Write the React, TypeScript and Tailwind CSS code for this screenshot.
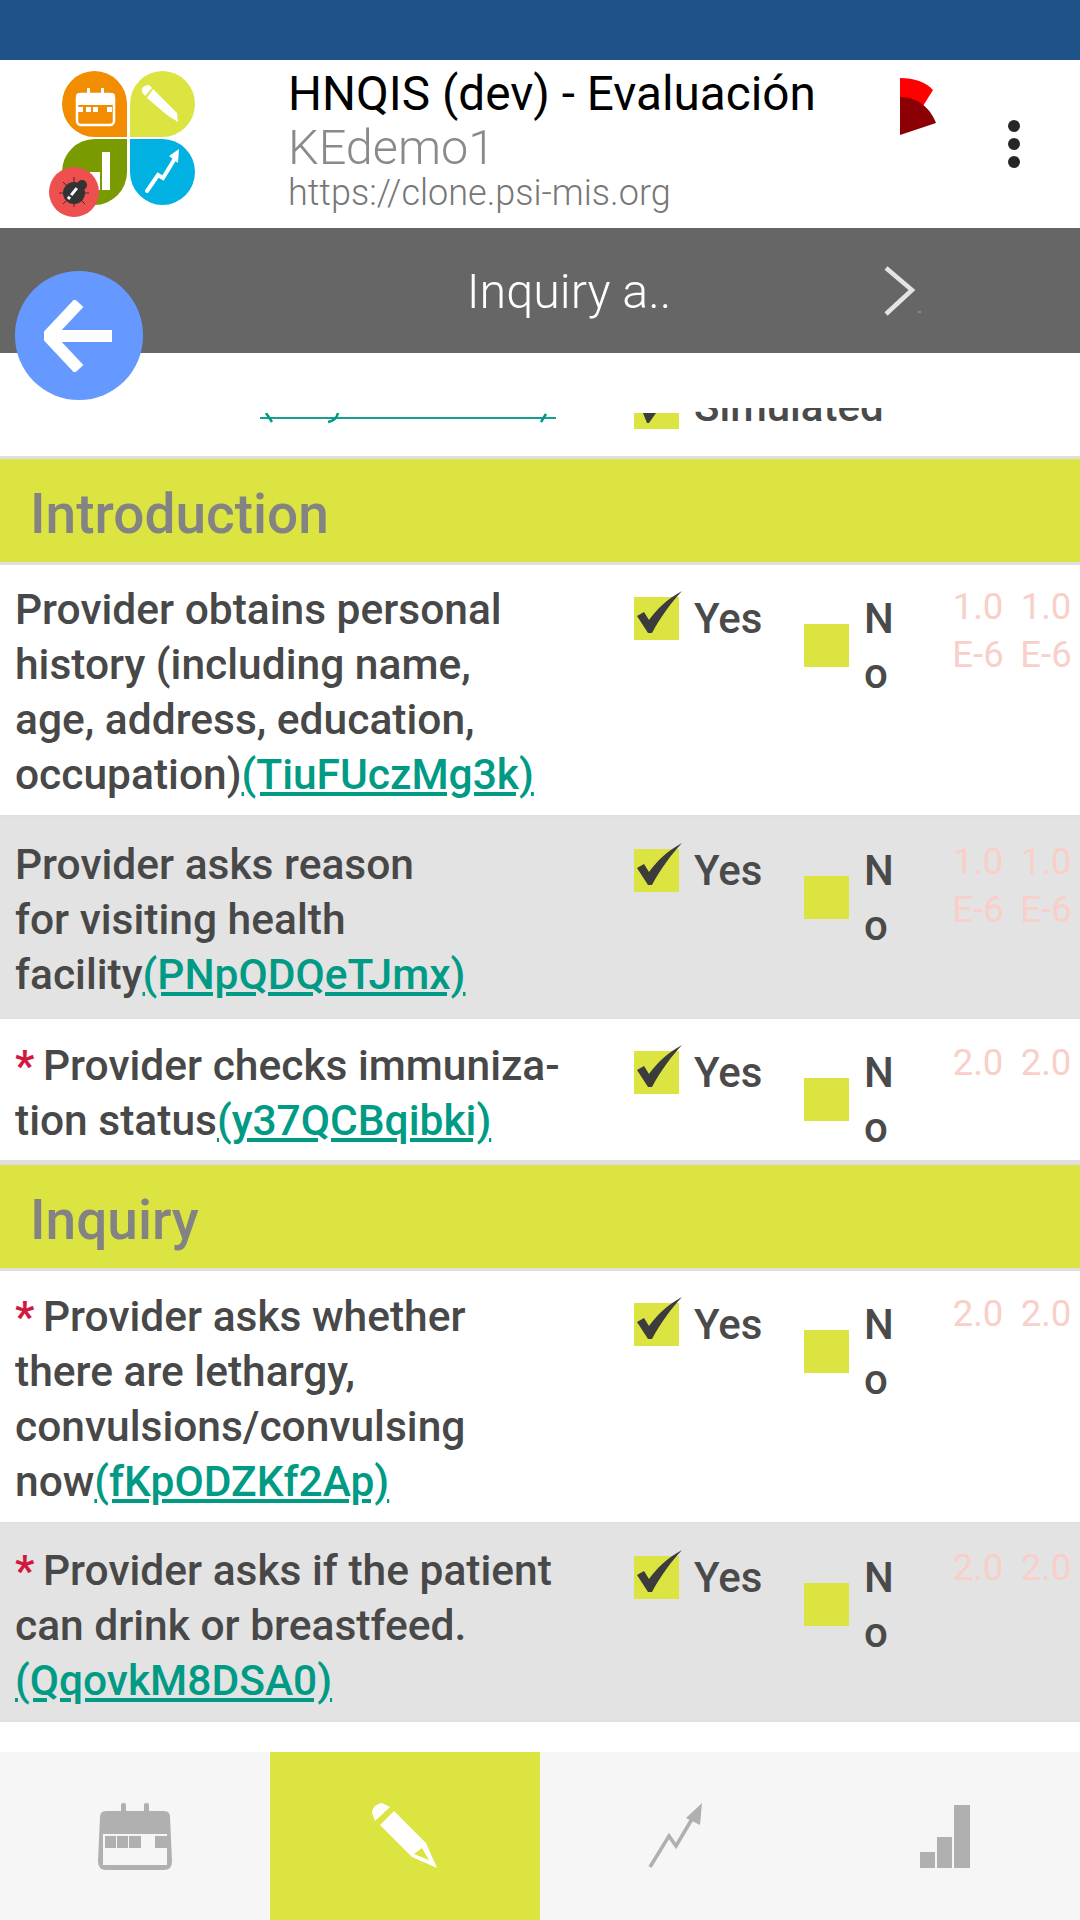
import React from "react";

const ROBOTO = "font-['Roboto','Noto_Sans',sans-serif]";

function Logo() {
  return (
    <svg width="150" height="152" viewBox="0 0 150 152">
      {/* calendario */}
      <path d="M13 36 a32.5 33 0 0 1 65 0 V69 H45.5 a32.5 33 0 0 1 -32.5 -33 Z" fill="#f28c00" />
      <rect x="28" y="26" width="37" height="31" rx="4" fill="none" stroke="#fff" strokeWidth="2.5" />
      <rect x="27" y="25" width="39" height="12" rx="3" fill="#fff" />
      <rect x="38" y="20" width="3" height="7" fill="#fff" />
      <rect x="52" y="20" width="3" height="7" fill="#fff" />
      <rect x="29" y="39" width="5" height="5" fill="#fff" />
      <rect x="37" y="39" width="5" height="5" fill="#fff" />
      <rect x="44" y="39" width="5" height="5" fill="#fff" />
      <rect x="58" y="39" width="5" height="5" fill="#fff" />
      {/* lapiz */}
      <path d="M81 69 V36 a32.5 33 0 0 1 65 0 a32.5 33 0 0 1 -32.5 33 Z" fill="#dce441" />
      <path d="M93 24 C92 19 96 17 100 17 L103 20 L96 28 Z" fill="#fff" />
      <path d="M104 21 L98 30 L118 47 L129 54 L128 45 Z" fill="#fff" />
      {/* barras */}
      <path d="M78 71 V104 a32.5 33 0 0 1 -65 0 a32.5 33 0 0 1 32.5 -33 Z" fill="#7a9a01" />
      <rect x="53" y="84" width="8" height="38" fill="#fff" />
      <rect x="41" y="104" width="10" height="18" fill="#fff" />
      {/* tendencia */}
      <path d="M81 71 H113.5 a32.5 33 0 0 1 0 66 a32.5 33 0 0 1 -32.5 -33 Z" fill="#00b1e1" />
      <path d="M98 123 L109 107 L114 110 L125 92" stroke="#fff" strokeWidth="4" fill="none" strokeLinecap="round" />
      <path d="M130 81 L120 88 L129 95 Z" fill="#fff" />
      {/* bicho */}
      <circle cx="25" cy="124" r="25" fill="#ee5050" />
      <circle cx="25" cy="125" r="11" fill="#333" />
      <circle cx="33" cy="117" r="5" fill="#333" />
      <path d="M25 109 V139 M10 125 H40 M14 114 L36 136 M14 136 L24 126" stroke="#333" strokeWidth="1" />
      <path d="M19 131 L28 120" stroke="#fff" strokeWidth="3" strokeDasharray="3 2 9" />
    </svg>
  );
}

function Check() {
  return (
    <svg className="absolute left-0 -top-[6px]" width="50" height="48" viewBox="0 0 50 48">
      <path d="M3 25 L10 21 L15 29 C22 19 33 8 48 0 C37 12 27 25 18 42 L14 42 Z" fill="#3c3c3c" />
    </svg>
  );
}

function Box({ checked, className }: { checked?: boolean; className?: string }) {
  return (
    <div className={`relative h-[43px] w-[45px] shrink-0 bg-[#dce441] ${className ?? ""}`}>
      {checked && <Check />}
    </div>
  );
}

function Score({ value, two }: { value: string; two?: boolean }) {
  return (
    <span className="w-[60px] text-center">
      {value}
      {two && <br />}
      {two && "E-6"}
    </span>
  );
}

type RowProps = {
  height: string;
  grey?: boolean;
  req?: boolean;
  lines: string[];
  code: string;
  score: string;
  two?: boolean;
  shift?: string;
};

function Row({ height, grey, req, lines, code, score, two, shift }: RowProps) {
  return (
    <div className={`flex border-b-2 border-[#e0e0e0] pt-[17px] ${height} ${grey ? "bg-[#e3e3e3]" : "bg-white"}`}>
      <div className={`w-[618px] shrink-0 pl-[15px] text-[42.5px] leading-[55px] font-medium text-[#484848] ${shift ?? ""}`}>
        {lines.map((l, i) => (
          <div key={i} className="whitespace-nowrap">
            {i === 0 && req && <span className="inline-block w-[28px] font-bold text-[#d3183f]">*</span>}
            {l}
            {i === lines.length - 1 && <span className="text-[#009a85] underline">{code}</span>}
          </div>
        ))}
      </div>
      <div className="flex w-[186px] shrink-0 items-start pt-[15px] pl-[16px]">
        <Box checked />
        <span className="ml-[15px] text-[42px] leading-[44px] font-medium text-[#4a4a4a]">Yes</span>
      </div>
      <div className="flex w-[144px] shrink-0 items-start pt-[15px]">
        <Box className="mt-[27px]" />
        <span className="-mt-[6px] ml-[15px] w-[30px] text-[42px] leading-[55px] font-medium text-[#4a4a4a]">
          N
          <br />o
        </span>
      </div>
      <div className={`flex w-[132px] gap-[8px] pt-[1px] text-[36.5px] leading-[48px] text-[#f8cfc9] ${shift ?? ""}`}>
        <Score value={score} two={two} />
        <Score value={score} two={two} />
      </div>
    </div>
  );
}

function Section({ title }: { title: string }) {
  return (
    <div className="flex h-[109px] shrink-0 items-center border-y-[3px] border-[#dfdfdf] bg-[#dce441] pt-[7px] pl-[30px] text-[55px] font-medium text-[#838383]">
      {title}
    </div>
  );
}

function NavIcon({ children, active }: { children: React.ReactNode; active?: boolean }) {
  return <div className={`flex flex-1 items-center justify-center ${active ? "bg-[#dce441]" : ""}`}>{children}</div>;
}

export default function App() {
  return (
    <div className={`relative flex h-[1920px] w-[1080px] flex-col overflow-hidden bg-white ${ROBOTO}`}>
      <div className="h-[60px] shrink-0 bg-[#1e5288]" />

      {/* encabezado */}
      <header className="relative flex h-[168px] shrink-0 items-start bg-white pl-[49px]">
        <div className="mt-[8px] w-[239px]">
          <Logo />
        </div>
        <div className="mt-[5px] flex flex-col">
          <span className="text-[47.7px] leading-[58px] text-black">HNQIS (dev) - Evaluación</span>
          <span className="text-[48.6px] leading-[50px] font-light text-[#8a8a8a]">KEdemo1</span>
          <span className="text-[36px] leading-[40px] font-light text-[#777777]">https://clone.psi-mis.org</span>
        </div>
        <svg className="absolute left-[900px] top-[18px]" width="38" height="58" viewBox="0 0 38 58">
          <path d="M0 0 C14 0 26 4 33 12 L23 28 L0 40 Z" fill="#ff0000" />
          <path d="M0 19 C18 19 30 30 36 45 L0 57 Z" fill="#8a0005" />
        </svg>
        <div className="absolute left-[1008px] top-[60px] flex flex-col gap-[6px]">
          <div className="h-[12px] w-[12px] rounded-full bg-[#262626]" />
          <div className="h-[12px] w-[12px] rounded-full bg-[#262626]" />
          <div className="h-[12px] w-[12px] rounded-full bg-[#262626]" />
        </div>
      </header>

      {/* progreso */}
      <div className="relative flex h-[125px] shrink-0 items-center justify-center bg-[#666666] pt-[4px] pl-[58px]">
        <span className="text-[48.4px] font-light text-white">Inquiry a..</span>
        <svg className="absolute left-[882px] top-[36px]" width="40" height="54" viewBox="0 0 40 54">
          <path d="M4 4 L30 26 L4 50" fill="none" stroke="#e4e4e4" strokeWidth="4.5" />
          <rect x="36" y="47" width="3" height="2" fill="#8a8a8a" />
        </svg>
      </div>

      {/* boton atras */}
      <div className="absolute left-[15px] top-[271px] z-10 flex h-[129px] w-[128px] items-center justify-center rounded-full bg-[#6699ff]">
        <svg width="70" height="72" viewBox="0 0 70 72">
          <path d="M35 3 L4 36 L35 69 M4 36 H68" fill="none" stroke="#fff" strokeWidth="12" />
        </svg>
      </div>

      {/* fila recortada por el scroll */}
      <div className="mt-[55px] flex h-[48px] shrink-0 overflow-hidden bg-white">
        <div className="relative w-[618px]">
          <div className="absolute left-[260px] top-[9px] h-[2px] w-[296px] bg-[#16a08c]" />
          <svg className="absolute left-[260px] top-[5px]" width="296" height="12" viewBox="0 0 296 12">
            <path d="M6 0 L12 9 M78 0 C77 5 73 8 68 9 M286 1 L281 9" fill="none" stroke="#009a85" strokeWidth="2.5" />
          </svg>
        </div>
        <div className="relative flex-1">
          <div className="absolute left-[16px] top-[5px] h-[16px] w-[45px] bg-[#dce441]" />
          <svg className="absolute left-[25px] top-[5px]" width="14" height="11" viewBox="0 0 14 11">
            <path d="M0 0 H13 L6 10 H4 Z" fill="#3c3c3c" />
          </svg>
          <span className="absolute left-[76px] top-[-23px] text-[42px] leading-[44px] font-medium text-[#4a4a4a]">Simulated</span>
        </div>
      </div>

      <Section title="Introduction" />
      <Row height="h-[252px]" lines={["Provider obtains personal", "history (including name,", "age, address, education,", "occupation)"]} code="(TiuFUczMg3k)" score="1.0" two />
      <Row height="h-[202px]" grey shift="mt-[3px]" lines={["Provider asks reason", "for visiting health", "facility"]} code="(PNpQDQeTJmx)" score="1.0" two />
      <Row height="h-[143px]" req shift="mt-[2px]" lines={["Provider checks immuniza-", "tion status"]} code="(y37QCBqibki)" score="2.0" />
      <Section title="Inquiry" />
      <Row height="h-[253px]" req shift="mt-[1px]" lines={["Provider asks whether", "there are lethargy,", "convulsions/convulsing", "now"]} code="(fKpODZKf2Ap)" score="2.0" />
      <Row height="h-[198px]" grey req shift="mt-[2px]" lines={["Provider asks if the patient", "can drink or breastfeed.", ""]} code="(QqovkM8DSA0)" score="2.0" />

      {/* barra inferior */}
      <nav className="absolute bottom-0 left-0 flex h-[168px] w-[1080px] bg-[#f6f6f6]">
        <NavIcon>
          <svg width="74" height="67" viewBox="0 0 74 67" fill="#b0b0b0">
            <path d="M2 14 Q2 8 8 8 H66 Q72 8 72 14 L74 58 Q74 67 66 67 H8 Q0 67 0 58 Z" />
            <rect x="5" y="31" width="64" height="31" fill="#f6f6f6" />
            <rect x="23" y="0" width="5" height="10" rx="2" />
            <rect x="46" y="0" width="5" height="10" rx="2" />
            <rect x="7" y="33" width="11" height="12" />
            <rect x="19" y="33" width="11" height="12" />
            <rect x="31" y="33" width="12" height="12" />
            <rect x="57" y="33" width="12" height="12" />
          </svg>
        </NavIcon>
        <NavIcon active>
          <svg width="66" height="66" viewBox="0 0 66 66" fill="#fff">
            <path d="M10 0 C4 1 0 5 0 10 L3 18 L18 4 Z" />
            <path fillRule="evenodd" d="M22 8 L8 22 L40 54 L65 65 L54 40 Z M42 51 L50 45 L57 57 Z" />
          </svg>
        </NavIcon>
        <NavIcon>
          <svg width="55" height="66" viewBox="0 0 55 66" fill="none">
            <path d="M2 64 L21 33 L28 43 L44 16" stroke="#b0b0b0" strokeWidth="3.5" />
            <path d="M54 0 L38 15 L52 22 Z" fill="#b0b0b0" />
          </svg>
        </NavIcon>
        <NavIcon>
          <svg width="50" height="63" viewBox="0 0 50 63" fill="#b0b0b0">
            <rect x="0" y="47" width="15" height="16" />
            <rect x="17" y="32" width="15" height="31" />
            <rect x="34" y="0" width="16" height="63" />
          </svg>
        </NavIcon>
      </nav>
    </div>
  );
}
